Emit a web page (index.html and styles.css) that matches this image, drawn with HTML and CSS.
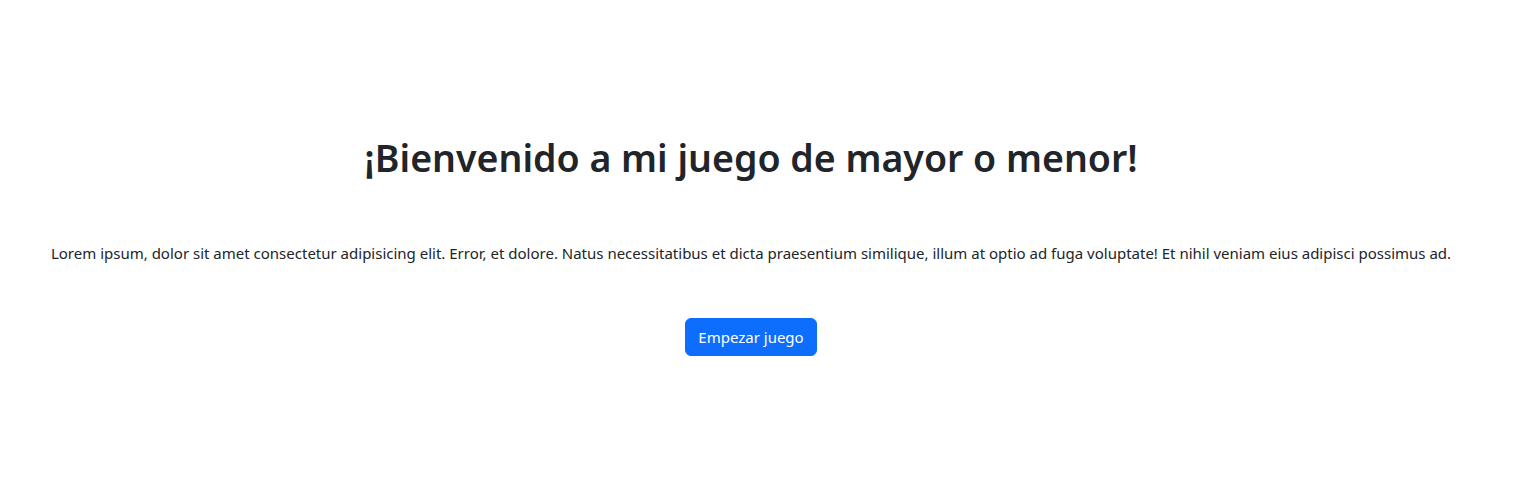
FILE: index.html
```html
<!DOCTYPE html>
<html lang="es">
<head>
<meta charset="utf-8">
<title>Mayor o menor</title>
<link rel="stylesheet" href="styles.css">
</head>
<body>
<main class="page">
  <h1 class="title">¡Bienvenido a mi juego de mayor o menor!</h1>
  <p class="lead-text">Lorem ipsum, dolor sit amet consectetur adipisicing elit. Error, et dolore. Natus necessitatibus et dicta praesentium similique, illum at optio ad fuga voluptate! Et nihil veniam eius adipisci possimus ad.</p>
  <button class="btn-start" type="button">Empezar juego</button>
</main>
</body>
</html>
```
FILE: styles.css
```css
html, body {
  margin: 0;
  padding: 0;
  background: #fff;
}
body {
  font-family: "Noto Sans", "Open Sans", sans-serif;
  color: #212529;
  font-size: 16px;
  line-height: 1.5;
}
.page {
  display: flex;
  flex-direction: column;
  align-items: center;
  text-align: center;
  padding: 134px 31px 0 0;
}
.title {
  margin: 0;
  font-size: 37.5px;
  line-height: 48px;
  font-weight: 600;
}
.lead-text {
  margin: 59px 0 0;
  font-size: 15px;
  line-height: 24px;
}
.btn-start {
  margin-top: 53px;
  height: 38px;
  padding: 0 12px;
  font-family: inherit;
  font-size: 15px;
  line-height: 24px;
  color: #fff;
  background: #0d6efd;
  border: 1px solid #0d6efd;
  border-radius: 6px;
  cursor: pointer;
}
```
